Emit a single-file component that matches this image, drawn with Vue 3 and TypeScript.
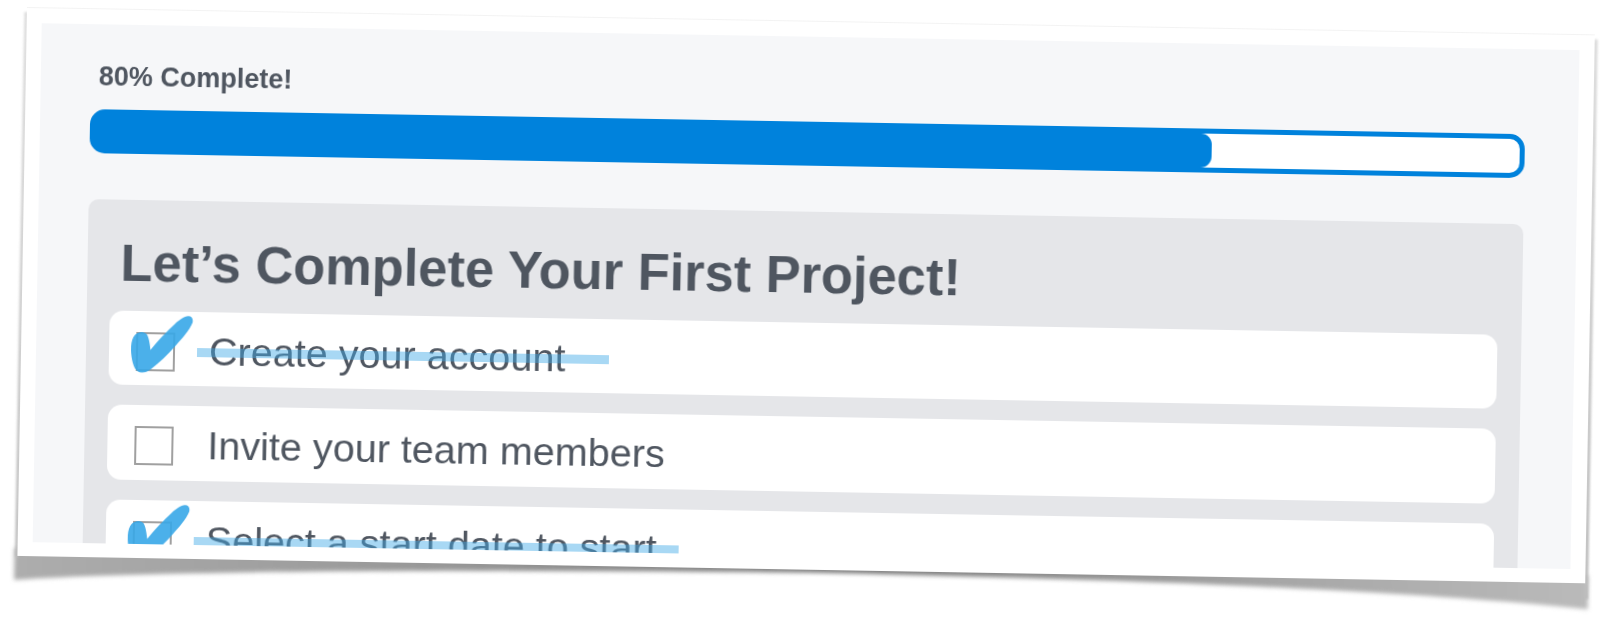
<script setup lang="ts">
interface Task {
  label: string
  done: boolean
  strike: number
}

const progress = 78.4

const tasks: Task[] = [
  { label: 'Create your account', done: true, strike: 412 },
  { label: 'Invite your team members', done: false, strike: 0 },
  { label: 'Select a start date to start', done: true, strike: 485 },
]
</script>

<template>
  <div class="stage">
    <div class="sheet">
      <svg class="shadow" width="1600" height="600" viewBox="-16 -8 1600 600" aria-hidden="true">
        <defs>
          <linearGradient id="under" x1="0" x2="1" y1="0" y2="0">
            <stop offset="0" stop-color="#adadad" />
            <stop offset="0.3" stop-color="#959595" />
            <stop offset="0.55" stop-color="#7b7b7b" />
            <stop offset="0.8" stop-color="#a6a6a6" />
            <stop offset="1" stop-color="#bababa" />
          </linearGradient>
          <linearGradient id="side" x1="0" x2="0" y1="0" y2="1">
            <stop offset="0" stop-color="#dcdcdc" />
            <stop offset="1" stop-color="#bcbcbc" />
          </linearGradient>
          <filter id="soft" x="-5%" y="-30%" width="110%" height="160%">
            <feGaussianBlur stdDeviation="2.2" />
          </filter>
          <filter id="edge" x="-200%" y="-5%" width="500%" height="110%">
            <feGaussianBlur stdDeviation="0.9" />
          </filter>
        </defs>
        <path
          filter="url(#soft)"
          d="M-3 540L-3 572C120 561 420 554 790 551C1150 552 1400 559 1571 574L1571 540Z"
          fill="url(#under)"
        />
        <g filter="url(#edge)">
          <rect x="-2.5" y="4" width="3.5" height="545" fill="url(#side)" />
          <rect x="1567" y="4" width="4" height="560" fill="url(#side)" />
        </g>
        <rect x="0" y="-1" width="1568" height="1.5" fill="#f3f3f3" />
      </svg>
      <div class="paper">
        <section class="panel">
          <p class="percent">80% Complete!</p>
          <div class="track">
            <div class="fill" :style="{ width: progress + '%' }"></div>
          </div>
          <div class="card">
            <h1 class="title">Let’s Complete Your First Project!</h1>
            <ul class="list">
              <li v-for="task in tasks" :key="task.label" class="row">
                <span class="box">
                  <svg
                    v-if="task.done"
                    class="tick"
                    width="62"
                    height="58"
                    viewBox="88 78 191 170"
                    preserveAspectRatio="none"
                    aria-hidden="true"
                  >
                    <path
                      d="M262 79C250 80 236 90 222 102C198 124 168 154 148 180C146 168 144 148 137 136C129 125 112 125 100 136C90 146 87 165 88 182C89 206 96 234 109 243C121 250 137 246 150 236C175 217 202 192 226 165C246 143 267 120 275 100C280 88 273 78 262 79Z"
                    />
                  </svg>
                </span>
                <span class="label">{{ task.label }}</span>
                <span
                  v-if="task.done"
                  class="strike"
                  :style="{ width: task.strike + 'px' }"
                ></span>
              </li>
            </ul>
          </div>
        </section>
      </div>
    </div>
  </div>
</template>

<style scoped>
.stage {
  width: 1614px;
  height: 643px;
  box-sizing: border-box;
  padding: 8px 0 0 27px;
  overflow: hidden;
  background: #fff;
  font-family: "Liberation Sans", Arial, sans-serif;
  color: #4f5660;
}
.sheet {
  position: relative;
  width: 1568px;
  height: 548px;
  transform: rotate(1deg);
  transform-origin: 0 0;
  filter: blur(0.35px);
}
.shadow {
  position: absolute;
  left: -16px;
  top: -8px;
}
.paper {
  position: relative;
  width: 100%;
  height: 100%;
  box-sizing: border-box;
  padding: 15px;
  background: #fff;
}
.panel {
  height: 519px;
  box-sizing: border-box;
  padding: 37px 53px 0 50px;
  background: #f6f7f9;
  overflow: hidden;
  display: flex;
  flex-direction: column;
}
.percent {
  margin: 0 0 18px 8px;
  font-size: 27px;
  line-height: 30px;
  font-weight: 700;
}
.track {
  flex: none;
  height: 44px;
  box-sizing: border-box;
  border: 5px solid #0082dc;
  border-radius: 15px;
  background: linear-gradient(90deg, #0082dc 50%, #fff 50%);
}
.fill {
  height: 100%;
  background: #0082dc;
  border-radius: 0 11px 11px 0;
}
.card {
  flex: none;
  height: 400px;
  margin-top: 45.5px;
  box-sizing: border-box;
  padding: 33px 24px 0 23px;
  background: #e5e6e9;
  border-radius: 10px 10px 0 0;
}
.title {
  margin: 0 0 18px 10px;
  font-size: 52.4px;
  line-height: 60px;
  font-weight: 700;
}
.list {
  margin: 0;
  padding: 0;
  list-style: none;
  display: flex;
  flex-direction: column;
  gap: 20px;
}
.row {
  position: relative;
  height: 74.5px;
  flex: none;
  box-sizing: border-box;
  padding: 21px 0 0 26.5px;
  display: flex;
  align-items: flex-start;
  background: #fff;
  border-radius: 14px;
}
.box {
  position: relative;
  flex: none;
  width: 39px;
  height: 39px;
  box-sizing: border-box;
  border: 2px solid #a0a0a0;
}
.tick {
  position: absolute;
  left: -7px;
  top: -18.5px;
  fill: #38a8e8;
  opacity: 0.9;
}
.label {
  margin: -2px 0 0 34.5px;
  font-size: 39.6px;
  line-height: 40px;
}
.strike {
  position: absolute;
  left: 88px;
  top: 36.5px;
  height: 8.5px;
  background: rgba(66, 171, 232, 0.46);
}
</style>
